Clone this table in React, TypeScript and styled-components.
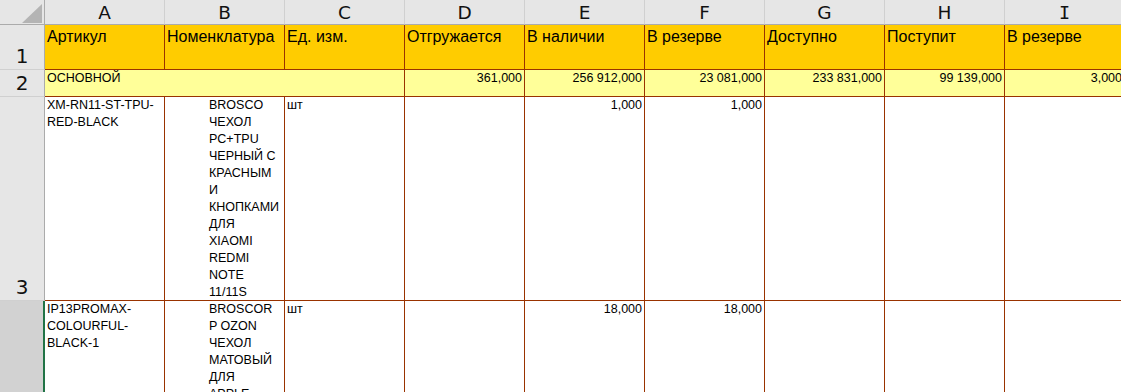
import React from "react";
import styled, { createGlobalStyle, css } from "styled-components";

const Global = createGlobalStyle`
  html, body { margin: 0; padding: 0; background: #ffffff; overflow: hidden; }
  body { font-family: "Liberation Sans", Arial, sans-serif; color: #000; }
`;

const BROWN = "#993300";

const Sheet = styled.div`
  display: grid;
  grid-template-columns: 45px repeat(9, 120px);
  grid-template-rows: 25px 45px 27px 204px 204px;
  width: 1125px;
`;

const Corner = styled.div`
  background: #e6e6e6;
  border-right: 1px solid #ababab;
  border-bottom: 1px solid #ababab;
  display: flex;
  align-items: flex-end;
  justify-content: flex-end;
  padding: 0 2px 1px 0;
`;

const ColHead = styled.div<{ $serif?: boolean }>`
  background: #e6e6e6;
  border-bottom: 1px solid #ababab;
  border-right: 1px solid #d0d0d0;
  display: flex;
  align-items: center;
  justify-content: center;
  padding-top: 2px;
  font-family: ${(p) => (p.$serif ? '"DejaVu Sans Mono"' : '"DejaVu Sans"')}, sans-serif;
  font-size: 18.5px;
  line-height: 1;
  color: #111;
`;

const RowHead = styled.div<{ $active?: boolean }>`
  background: ${(p) => (p.$active ? "#d2d2d2" : "#e6e6e6")};
  border-right: 1px solid #ababab;
  border-bottom: 1px solid #d0d0d0;
  display: flex;
  align-items: flex-end;
  justify-content: center;
  padding-bottom: 3px;
  font-family: "DejaVu Sans", sans-serif;
  font-size: 20px;
  line-height: 20px;
  color: #111;
  overflow: hidden;
`;

type Tone = "head" | "group" | "data";

const Cell = styled.div<{
  $tone: Tone;
  $align?: "left" | "right";
  $indent?: boolean;
  $span?: number;
  $selected?: boolean;
}>`
  position: relative;
  border-right: 1px solid ${BROWN};
  border-bottom: 1px solid ${BROWN};
  padding: 0 2px;
  overflow: hidden;
  white-space: pre-line;
  text-align: ${(p) => p.$align ?? "left"};
  grid-column: ${(p) => (p.$span ? `span ${p.$span}` : "auto")};
  ${(p) =>
    p.$tone === "head" &&
    css`
      background: #ffcc00;
      font-size: 16px;
      line-height: normal;
      padding-top: 3px;
      white-space: nowrap;
    `}
  ${(p) =>
    p.$tone === "group" &&
    css`
      background: #ffff99;
      font-size: 12.5px;
      line-height: 17px;
      white-space: nowrap;
    `}
  ${(p) =>
    p.$tone === "data" &&
    css`
      background: #ffffff;
      font-size: 12.5px;
      line-height: 17px;
    `}
  ${(p) =>
    p.$indent &&
    css`
      padding-left: 44px;
    `}
  ${(p) =>
    p.$selected &&
    css`
      overflow: visible;
      &::before {
        content: "";
        position: absolute;
        left: -2px;
        top: 0;
        bottom: -1px;
        width: 2px;
        background: #217346;
      }
    `}
`;

const Triangle = () => (
  <svg width="20" height="19" viewBox="0 0 20 19">
    <polygon points="20,0 20,19 0,19" fill="#b4b4b4" />
  </svg>
);

const letters = ["A", "B", "C", "D", "E", "F", "G", "H", "I"];
const headers = [
  "Артикул",
  "Номенклатура",
  "Ед. изм.",
  "Отгружается",
  "В наличии",
  "В резерве",
  "Доступно",
  "Поступит",
  "В резерве",
];

const groupValues = ["361,000", "256 912,000", "23 081,000", "233 831,000", "99 139,000", "3,000"];

type Item = {
  num: number;
  article: string;
  name: string;
  unit: string;
  values: string[];
  active?: boolean;
};

const items: Item[] = [
  {
    num: 3,
    article: "XM-RN11-ST-TPU-\nRED-BLACK",
    name: "BROSCO\nЧЕХОЛ\nPC+TPU\nЧЕРНЫЙ С\nКРАСНЫМ\nИ\nКНОПКАМИ\nДЛЯ\nXIAOMI\nREDMI\nNOTE\n11/11S",
    unit: "шт",
    values: ["", "1,000", "1,000", "", "", ""],
  },
  {
    num: 4,
    article: "IP13PROMAX-\nCOLOURFUL-\nBLACK-1",
    name: "BROSCOR\nP OZON\nЧЕХОЛ\nМАТОВЫЙ\nДЛЯ\nAPPLE\nIPHONE 13\nPRO MAX",
    unit: "шт",
    values: ["", "18,000", "18,000", "", "", ""],
    active: true,
  },
];

export default function App() {
  return (
    <>
      <Global />
      <Sheet>
        <Corner>
          <Triangle />
        </Corner>
        {letters.map((l) => (
          <ColHead key={l} $serif={l === "I"}>
            {l}
          </ColHead>
        ))}

        <RowHead>1</RowHead>
        {headers.map((h, i) => (
          <Cell key={i} $tone="head">
            {h}
          </Cell>
        ))}

        <RowHead>2</RowHead>
        <Cell $tone="group" $span={3}>
          ОСНОВНОЙ
        </Cell>
        {groupValues.map((v, i) => (
          <Cell key={i} $tone="group" $align="right">
            {v}
          </Cell>
        ))}

        {items.map((it) => (
          <React.Fragment key={it.num}>
            <RowHead $active={it.active}>{it.num}</RowHead>
            <Cell $tone="data" $selected={it.active}>
              {it.article}
            </Cell>
            <Cell $tone="data" $indent>
              {it.name}
            </Cell>
            <Cell $tone="data">{it.unit}</Cell>
            {it.values.map((v, i) => (
              <Cell key={i} $tone="data" $align="right">
                {v}
              </Cell>
            ))}
          </React.Fragment>
        ))}
      </Sheet>
    </>
  );
}
